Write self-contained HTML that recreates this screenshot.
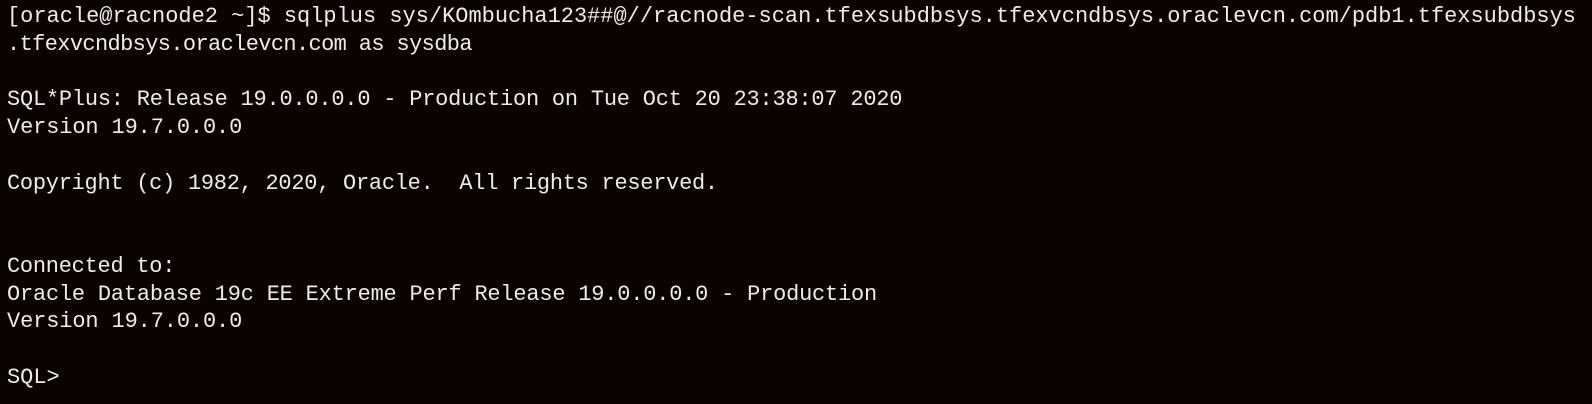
<!DOCTYPE html>
<html><head><style>
html,body{margin:0;padding:0;background:#0b0302;width:1592px;height:404px;overflow:hidden}
pre{margin:0;padding:3px 0 0 7px;font-family:"Liberation Mono",monospace;font-size:21.95px;line-height:27.75px;color:#ececec;white-space:pre}
.l{display:block;height:27.75px}
</style></head><body><pre><span class="l" style="letter-spacing:0.02px">[oracle@racnode2 ~]$ sqlplus sys/KOmbucha123##@//racnode-scan.tfexsubdbsys.tfexvcndbsys.oraclevcn.com/pdb1.tfexsubdbsys</span><span class="l" style="letter-spacing:-0.6px">.tfexvcndbsys.oraclevcn.com as sysdba</span><span class="l"></span><span class="l" style="letter-spacing:-0.19px">SQL*Plus: Release 19.0.0.0.0 - Production on Tue Oct 20 23:38:07 2020</span><span class="l" style="letter-spacing:-0.1px">Version 19.7.0.0.0</span><span class="l"></span><span class="l" style="letter-spacing:-0.24px">Copyright (c) 1982, 2020, Oracle.  All rights reserved.</span><span class="l"></span><span class="l"></span><span class="l" style="letter-spacing:-0.23px">Connected to:</span><span class="l" style="letter-spacing:-0.18px">Oracle Database 19c EE Extreme Perf Release 19.0.0.0.0 - Production</span><span class="l" style="letter-spacing:-0.1px">Version 19.7.0.0.0</span><span class="l"></span><span class="l">SQL&gt; </span></pre></body></html>
